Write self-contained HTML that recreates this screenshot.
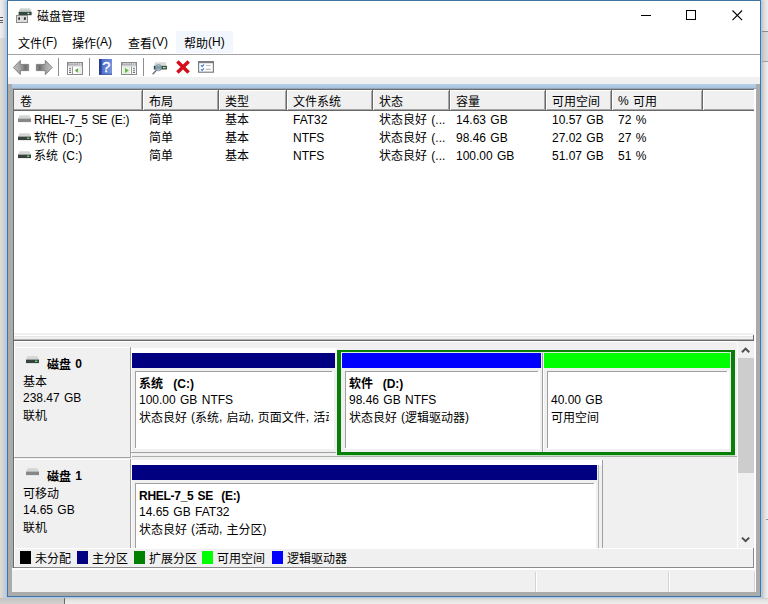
<!DOCTYPE html>
<html lang="zh-CN">
<head>
<meta charset="utf-8">
<title>磁盘管理</title>
<style>
*{box-sizing:border-box;margin:0;padding:0}
html,body{width:768px;height:604px;overflow:hidden}
body{position:relative;background:#e2e0de;font-family:"Liberation Sans","Noto Sans CJK SC",sans-serif;font-size:12px;color:#000;line-height:16px;word-spacing:1px}
#r>div,#r>svg{position:absolute}
.t{white-space:nowrap;line-height:16px;height:16px;overflow:visible}
.b{font-weight:bold}
.c{overflow:hidden!important}
.z{position:relative;top:1px}
.m .z{top:2px}
</style>
</head>
<body>
<div id="r">
<div style="left:0px;top:0px;width:6px;height:604px;background:linear-gradient(90deg,#dfdcd9 0,#d3d3d3 3px,#c3cbd4 5px,#b9cbde 6px);"></div>
<div style="left:0px;top:0px;width:6px;height:38px;background:linear-gradient(90deg,#eeeeee 0,#e4e4e4 3px,#cdd3da 5px,#bccde0 6px);"></div>
<div style="left:0px;top:17px;width:3px;height:1px;background:#555;"></div>
<div style="left:0px;top:20px;width:3px;height:1px;background:#555;"></div>
<div style="left:0px;top:22px;width:3px;height:1px;background:#666;"></div>
<div style="left:762px;top:0px;width:6px;height:604px;background:linear-gradient(90deg,#c6c6c6 0,#dcdcdc 2px,#ededed 6px);"></div>
<div style="left:762px;top:31px;width:6px;height:1px;background:#8c8c8c;"></div>
<div style="left:762px;top:32px;width:6px;height:29px;background:linear-gradient(90deg,#bcbcbc 0,#d0d0d0 2px,#dedede 6px);"></div>
<div style="left:762px;top:61px;width:6px;height:1px;background:#a0a0a0;"></div>
<div style="left:762px;top:62px;width:6px;height:542px;background:linear-gradient(90deg,#bebebe 0,#dadada 2px,#f0f0f0 6px);"></div>
<div style="left:766px;top:519px;width:2px;height:1px;background:#909090;"></div>
<div style="left:0px;top:598px;width:65px;height:6px;background:linear-gradient(180deg,#c4c4c4 0,#d2d0ce 6px);"></div>
<div style="left:65px;top:598px;width:703px;height:6px;background:linear-gradient(180deg,#cccccc 0,#e2e2e2 2px,#f0efee 6px);"></div>
<div style="left:64px;top:597px;width:1px;height:7px;background:#6a6a6a;"></div>
<div style="left:6px;top:0px;width:756px;height:598px;background:#a9cbea;"></div>
<div style="left:6px;top:0px;width:1px;height:1px;background:#dfe3e8;"></div>
<div style="left:761px;top:0px;width:1px;height:1px;background:#dfe3e8;"></div>
<div style="left:7px;top:0px;width:754px;height:597px;background:#fff;border:1px solid #43739f"></div>
<svg style="left:16px;top:7px" width="17" height="17" viewBox="0 0 17 17">
<defs><linearGradient id="gt" x1="0" y1="0" x2="0" y2="1"><stop offset="0" stop-color="#e4e8e6"/><stop offset="1" stop-color="#a9b3ae"/></linearGradient></defs>
<path d="M4.2 1h9.8l1.6 4H2.6z" fill="url(#gt)"/>
<rect x="2.6" y="5" width="13" height="3.2" fill="#33483c"/>
<rect x="11.6" y="5.9" width="1.6" height="1.2" fill="#d8f5dc"/>
<rect x="0.5" y="8.5" width="11" height="7" fill="#dcdcdc" stroke="#8c8c8c"/>
<rect x="2.3" y="10.3" width="1.7" height="2.5" fill="#2e2e2e"/>
<rect x="7.9" y="10.3" width="1.9" height="2.5" fill="#2e2e2e"/>
</svg>
<div class="t" style="left:37px;top:8px;"><span class="z">磁盘管理</span></div>
<svg style="left:636px;top:5px" width="112" height="20" viewBox="0 0 112 20">
<path d="M5 10.5h10" stroke="#000" stroke-width="1" fill="none"/>
<rect x="50.5" y="5.5" width="9" height="9" stroke="#000" stroke-width="1" fill="none"/>
<path d="M96.5 5.5l9.6 9.6M106.1 5.5l-9.6 9.6" stroke="#000" stroke-width="1.1" fill="none"/>
</svg>
<div style="left:176px;top:31px;width:57px;height:22px;background:#f2f7fd;"></div>
<div class="t m" style="left:18px;top:34px;"><span class="z">文件</span>(F)</div>
<div class="t m" style="left:72px;top:34px;"><span class="z">操作</span>(A)</div>
<div class="t m" style="left:128px;top:34px;"><span class="z">查看</span>(V)</div>
<div class="t m" style="left:184px;top:34px;"><span class="z">帮助</span>(H)</div>
<div style="left:8px;top:54px;width:752px;height:1px;background:#a3a3a3;"></div>
<div style="left:8px;top:77px;width:752px;height:7px;background:#f0f0f0;"></div>
<div style="left:58px;top:58px;width:1px;height:18px;background:#8f8f8f;"></div>
<div style="left:89px;top:58px;width:1px;height:18px;background:#8f8f8f;"></div>
<div style="left:143px;top:58px;width:1px;height:18px;background:#8f8f8f;"></div>
<svg style="left:12px;top:59px" width="42" height="18" viewBox="0 0 42 18">
<defs>
<linearGradient id="ga" x1="0" y1="0" x2="1" y2="0"><stop offset="0" stop-color="#c4c4c4"/><stop offset="0.45" stop-color="#a2a2a2"/><stop offset="0.8" stop-color="#6f6f6f"/><stop offset="1" stop-color="#8d8d8d"/></linearGradient>
<linearGradient id="gb" x1="1" y1="0" x2="0" y2="0"><stop offset="0" stop-color="#c4c4c4"/><stop offset="0.45" stop-color="#a2a2a2"/><stop offset="0.8" stop-color="#6f6f6f"/><stop offset="1" stop-color="#8d8d8d"/></linearGradient>
</defs>
<path d="M1.4 8.5L8.3 1.4V5.4H16.6V11.6H8.3V15.6Z" fill="url(#ga)" stroke="#808080" stroke-width="1" stroke-linejoin="round"/>
<path d="M40.2 8.5L33.3 1.4V5.4H24.4V11.6H33.3V15.6Z" fill="url(#gb)" stroke="#808080" stroke-width="1" stroke-linejoin="round"/>
</svg>
<svg style="left:67px;top:62px" width="16" height="13" viewBox="0 0 16 13">
<rect x="0.5" y="0.5" width="15" height="12" fill="#fff" stroke="#8b8b8f"/>
<rect x="1" y="1" width="14" height="2.6" fill="#a3a3a8"/>
<path d="M2 1.8h8" stroke="#e6e6e6" stroke-width="0.8"/>
<rect x="11" y="1.3" width="1.3" height="1.3" fill="#fff"/><rect x="13" y="1.3" width="1.3" height="1.3" fill="#fff"/>
<path d="M1 4.1h14" stroke="#d2d2d6" stroke-width="0.9"/>
<path d="M5.5 4.5v8" stroke="#9a9a9a" stroke-width="1"/>
<path d="M2 6.2h2.2M2 8.3h2.2M2 10.4h2.2" stroke="#6c6c74" stroke-width="1.1"/>
<rect x="12.2" y="5" width="2.8" height="7" fill="#ececec"/>
<path d="M11.2 5.9v5L7.7 8.4z" fill="#5db043"/>
</svg>
<svg style="left:99px;top:59px" width="13" height="16" viewBox="0 0 13 16">
<defs><linearGradient id="gh" x1="0" y1="0" x2="1" y2="0.3"><stop offset="0" stop-color="#3f5fc4"/><stop offset="1" stop-color="#7490de"/></linearGradient></defs>
<rect x="0" y="0" width="13" height="15.6" fill="url(#gh)"/>
<rect x="0" y="0" width="2.6" height="15.6" fill="#27408f"/>
<rect x="0" y="14.8" width="13" height="0.9" fill="#2c4596"/>
<text x="7.4" y="13.2" font-family="Liberation Sans, sans-serif" font-size="14.5" fill="#fff" stroke="#fff" stroke-width="0.3" text-anchor="middle">?</text>
</svg>
<svg style="left:121px;top:62px" width="16" height="13" viewBox="0 0 16 13">
<rect x="0.5" y="0.5" width="15" height="12" fill="#fff" stroke="#8b8b8f"/>
<rect x="1" y="1" width="14" height="2.6" fill="#a3a3a8"/>
<path d="M2 1.8h8" stroke="#e6e6e6" stroke-width="0.8"/>
<rect x="11" y="1.3" width="1.3" height="1.3" fill="#fff"/><rect x="13" y="1.3" width="1.3" height="1.3" fill="#fff"/>
<path d="M1 4.1h14" stroke="#d2d2d6" stroke-width="0.9"/>
<path d="M10.5 4.5v8" stroke="#9a9a9a" stroke-width="1"/>
<path d="M11.9 6.2h2.2M11.9 8.3h2.2M11.9 10.4h2.2" stroke="#6c6c74" stroke-width="1.1"/>
<rect x="1.6" y="5" width="7.6" height="7" fill="#e4f1de"/>
<path d="M4.1 5.9v5L7.6 8.4z" fill="#5db043"/>
</svg>
<svg style="left:152px;top:61px" width="16" height="15" viewBox="0 0 16 15">
<path d="M3.2 1.2h10.4l1 3.7H2z" fill="#d6dad8"/>
<rect x="1.8" y="4.9" width="13.1" height="3.6" fill="#2f4a3b"/>
<rect x="11" y="6" width="2.6" height="1.3" fill="#b5efbd"/>
<circle cx="6.5" cy="6.7" r="3.1" fill="#a9c2da" fill-opacity="0.7" stroke="#7f8fa0" stroke-width="0.9"/>
<path d="M4.4 9.3L0.6 13.2" stroke="#6a6a6a" stroke-width="1.3"/>
</svg>
<svg style="left:175px;top:59px" width="16" height="16" viewBox="0 0 16 16">
<path d="M2.4 2.4L13.6 13.6M13.6 2.4L2.4 13.6" stroke="#d40f1b" stroke-width="3.5" fill="none"/>
</svg>
<svg style="left:198px;top:61px" width="16" height="12" viewBox="0 0 16 12">
<rect x="0.6" y="0.6" width="14.8" height="10.6" fill="#fff" stroke="#7b7f84" stroke-width="1.2"/>
<rect x="0.6" y="0.6" width="14.8" height="1.6" fill="#7b7f84"/>
<path d="M3 4.2l1.2 1.4L6 3.4M3 8.1l1.2 1.4L6 7.3" stroke="#3f7fd0" stroke-width="1.1" fill="none"/>
<path d="M7.8 4.5h5M7.8 8.4h5" stroke="#bdbdbd" stroke-width="1.1"/>
</svg>
<div style="left:8px;top:84px;width:752px;height:512px;background:#ababab;"></div>
<div style="left:12px;top:84px;width:744px;height:4px;background:linear-gradient(180deg,#b9d1ea,#a7c2df);"></div>
<div style="left:12px;top:88px;width:744px;height:1px;background:#93a5ba;"></div>
<div style="left:13px;top:89px;width:742px;height:503px;background:#f0f0f0;"></div>
<div style="left:13px;top:89px;width:742px;height:252px;background:#fff;border-top:1px solid #6b6b6b;border-left:1px solid #6b6b6b;border-right:1px solid #fff"></div>
<div style="left:14px;top:90px;width:740px;height:21px;background:#f0f0f0;border-top:1px solid #fff;border-bottom:1px solid #696969"></div>
<div style="left:14px;top:109px;width:740px;height:1px;background:#a6a6a6;"></div>
<div style="left:141px;top:91px;width:1px;height:19px;background:#a6a6a6;"></div>
<div style="left:142px;top:90px;width:1px;height:21px;background:#696969;"></div>
<div style="left:143px;top:90px;width:1px;height:20px;background:#fff;"></div>
<div style="left:217px;top:91px;width:1px;height:19px;background:#a6a6a6;"></div>
<div style="left:218px;top:90px;width:1px;height:21px;background:#696969;"></div>
<div style="left:219px;top:90px;width:1px;height:20px;background:#fff;"></div>
<div style="left:285px;top:91px;width:1px;height:19px;background:#a6a6a6;"></div>
<div style="left:286px;top:90px;width:1px;height:21px;background:#696969;"></div>
<div style="left:287px;top:90px;width:1px;height:20px;background:#fff;"></div>
<div style="left:371px;top:91px;width:1px;height:19px;background:#a6a6a6;"></div>
<div style="left:372px;top:90px;width:1px;height:21px;background:#696969;"></div>
<div style="left:373px;top:90px;width:1px;height:20px;background:#fff;"></div>
<div style="left:448px;top:91px;width:1px;height:19px;background:#a6a6a6;"></div>
<div style="left:449px;top:90px;width:1px;height:21px;background:#696969;"></div>
<div style="left:450px;top:90px;width:1px;height:20px;background:#fff;"></div>
<div style="left:544px;top:91px;width:1px;height:19px;background:#a6a6a6;"></div>
<div style="left:545px;top:90px;width:1px;height:21px;background:#696969;"></div>
<div style="left:546px;top:90px;width:1px;height:20px;background:#fff;"></div>
<div style="left:610px;top:91px;width:1px;height:19px;background:#a6a6a6;"></div>
<div style="left:611px;top:90px;width:1px;height:21px;background:#696969;"></div>
<div style="left:612px;top:90px;width:1px;height:20px;background:#fff;"></div>
<div style="left:701px;top:91px;width:1px;height:19px;background:#a6a6a6;"></div>
<div style="left:702px;top:90px;width:1px;height:21px;background:#696969;"></div>
<div style="left:703px;top:90px;width:1px;height:20px;background:#fff;"></div>
<div class="t" style="left:20px;top:93px;"><span class="z">卷</span></div>
<div class="t" style="left:149px;top:93px;"><span class="z">布局</span></div>
<div class="t" style="left:225px;top:93px;"><span class="z">类型</span></div>
<div class="t" style="left:293px;top:93px;"><span class="z">文件系统</span></div>
<div class="t" style="left:379px;top:93px;"><span class="z">状态</span></div>
<div class="t" style="left:456px;top:93px;"><span class="z">容量</span></div>
<div class="t" style="left:552px;top:93px;"><span class="z">可用空间</span></div>
<div class="t" style="left:618px;top:93px;">% <span class="z">可用</span></div>
<svg style="left:17.5px;top:115px" width="14" height="8" viewBox="0 0 14 8"><path d="M1.5 0.3h10l1.5 3.4H0z" fill="#d3d6d5"/><rect x="0" y="3.6" width="13" height="3.5" fill="#858887"/></svg>
<div class="t" style="left:34px;top:112px;letter-spacing:-0.3px">RHEL-7_5 SE (E:)</div>
<div class="t" style="left:149px;top:112px;">简单</div>
<div class="t" style="left:225px;top:112px;">基本</div>
<div class="t" style="left:293px;top:112px;">FAT32</div>
<div class="t" style="left:379px;top:112px;">状态良好 (...</div>
<div class="t" style="left:456px;top:112px;">14.63 GB</div>
<div class="t" style="left:552px;top:112px;">10.57 GB</div>
<div class="t" style="left:618px;top:112px;">72 %</div>
<svg style="left:17.5px;top:133px" width="14" height="8" viewBox="0 0 14 8"><path d="M1.5 0.3h10l1.5 3.4H0z" fill="#d3d6d5"/><rect x="0" y="3.6" width="13" height="3.5" fill="#38413e"/><rect x="9" y="4.6" width="2.4" height="1.3" fill="#5ee36a"/></svg>
<div class="t" style="left:34px;top:130px;">软件 (D:)</div>
<div class="t" style="left:149px;top:130px;">简单</div>
<div class="t" style="left:225px;top:130px;">基本</div>
<div class="t" style="left:293px;top:130px;">NTFS</div>
<div class="t" style="left:379px;top:130px;">状态良好 (...</div>
<div class="t" style="left:456px;top:130px;">98.46 GB</div>
<div class="t" style="left:552px;top:130px;">27.02 GB</div>
<div class="t" style="left:618px;top:130px;">27 %</div>
<svg style="left:17.5px;top:151px" width="14" height="8" viewBox="0 0 14 8"><path d="M1.5 0.3h10l1.5 3.4H0z" fill="#d3d6d5"/><rect x="0" y="3.6" width="13" height="3.5" fill="#38413e"/><rect x="9" y="4.6" width="2.4" height="1.3" fill="#5ee36a"/></svg>
<div class="t" style="left:34px;top:148px;">系统 (C:)</div>
<div class="t" style="left:149px;top:148px;">简单</div>
<div class="t" style="left:225px;top:148px;">基本</div>
<div class="t" style="left:293px;top:148px;">NTFS</div>
<div class="t" style="left:379px;top:148px;">状态良好 (...</div>
<div class="t" style="left:456px;top:148px;">100.00 GB</div>
<div class="t" style="left:552px;top:148px;">51.07 GB</div>
<div class="t" style="left:618px;top:148px;">51 %</div>
<div style="left:14px;top:333px;width:740px;height:8px;background:#f0f0f0;"></div>
<div style="left:14px;top:335px;width:740px;height:1px;background:#fff;"></div>
<div style="left:14px;top:336px;width:740px;height:1px;background:#e6e6e6;"></div>
<div style="left:14px;top:339px;width:740px;height:1px;background:#b4b4b4;"></div>
<div style="left:14px;top:340px;width:740px;height:1px;background:#686868;"></div>
<div style="left:753px;top:335px;width:1px;height:6px;background:#686868;"></div>
<div style="left:14px;top:341px;width:740px;height:1px;background:#fff;"></div>
<div style="left:14px;top:341px;width:1px;height:207px;background:#fff;"></div>
<div style="left:14px;top:347px;width:116px;height:1px;background:#fff;"></div>
<div style="left:130px;top:347px;width:1px;height:110px;background:#a0a0a0;"></div>
<div style="left:131px;top:347px;width:1px;height:110px;background:#fff;"></div>
<div style="left:14px;top:457px;width:117px;height:1px;background:#a0a0a0;"></div>
<svg style="left:25.5px;top:356px" width="14" height="8" viewBox="0 0 14 8"><path d="M1.5 0.3h10l1.5 3.4H0z" fill="#d3d6d5"/><rect x="0" y="3.6" width="13" height="3.5" fill="#38413e"/><rect x="9" y="4.6" width="2.4" height="1.3" fill="#5ee36a"/></svg>
<div class="t b" style="left:47px;top:356px;"><span class="z">磁盘</span> 0</div>
<div class="t" style="left:23px;top:373px;"><span class="z">基本</span></div>
<div class="t" style="left:23px;top:390px;">238.47 GB</div>
<div class="t" style="left:23px;top:407px;"><span class="z">联机</span></div>
<div style="left:132px;top:348px;width:205px;height:5px;background:#fff;"></div>
<div style="left:132px;top:353px;width:203px;height:15px;background:#000080;"></div>
<div style="left:135px;top:371px;width:199px;height:78px;background:#fff;"></div>
<div style="left:135px;top:371px;width:197px;height:1px;background:#a0a0a0;"></div>
<div style="left:135px;top:371px;width:1px;height:77px;background:#a0a0a0;"></div>
<div class="t c b" style="left:139px;top:376px;width:190px;word-spacing:1.8px">系统&nbsp; (C:)</div>
<div class="t c" style="left:139px;top:392px;width:190px;">100.00 GB NTFS</div>
<div class="t c" style="left:139px;top:409px;width:190px;word-spacing:0.7px"><span class="z">状态良好</span> (<span class="z">系统</span>, <span class="z">启动</span>, <span class="z">页面文件</span>, <span class="z">活动</span>, <span class="z">故障转储</span>, <span class="z">主分区</span>)</div>
<div style="left:337px;top:350px;width:398px;height:105px;background:transparent;border:3px solid #088008;border-left-width:4px;border-right-width:4px"></div>
<div style="left:342px;top:353px;width:199px;height:15px;background:#0000ff;"></div>
<div style="left:345px;top:371px;width:195px;height:78px;background:#fff;"></div>
<div style="left:345px;top:371px;width:193px;height:1px;background:#a0a0a0;"></div>
<div style="left:345px;top:371px;width:1px;height:77px;background:#a0a0a0;"></div>
<div class="t c b" style="left:349px;top:376px;width:186px;word-spacing:1.5px">软件&nbsp; (D:)</div>
<div class="t c" style="left:349px;top:392px;width:186px;">98.46 GB NTFS</div>
<div class="t c" style="left:349px;top:409px;width:186px;word-spacing:0.7px"><span class="z">状态良好</span> (<span class="z">逻辑驱动器</span>)</div>
<div style="left:542px;top:353px;width:1px;height:99px;background:#a0a0a0;"></div>
<div style="left:543px;top:353px;width:1px;height:99px;background:#fff;"></div>
<div style="left:341px;top:352px;width:390px;height:1px;background:#d8eed8;"></div>
<div style="left:337px;top:455px;width:398px;height:1px;background:#b9e3b9;"></div>
<div style="left:544px;top:353px;width:186px;height:15px;background:#00ff00;"></div>
<div style="left:547px;top:371px;width:182px;height:78px;background:#fff;"></div>
<div style="left:547px;top:371px;width:180px;height:1px;background:#a0a0a0;"></div>
<div style="left:547px;top:371px;width:1px;height:77px;background:#a0a0a0;"></div>
<div class="t c" style="left:551px;top:392px;width:173px;">40.00 GB</div>
<div class="t c" style="left:551px;top:409px;width:173px;word-spacing:0.7px"><span class="z">可用空间</span></div>
<div style="left:131px;top:452px;width:205px;height:1px;background:#a0a0a0;"></div>
<div style="left:132px;top:456px;width:605px;height:1px;background:#a8b0a8;"></div>
<div style="left:14px;top:459px;width:116px;height:1px;background:#fff;"></div>
<div style="left:130px;top:459px;width:1px;height:110px;background:#a0a0a0;"></div>
<div style="left:131px;top:459px;width:1px;height:110px;background:#fff;"></div>
<div style="left:14px;top:569px;width:117px;height:1px;background:#a0a0a0;"></div>
<svg style="left:25.5px;top:468px" width="14" height="8" viewBox="0 0 14 8"><path d="M1.5 0.3h10l1.5 3.4H0z" fill="#d3d6d5"/><rect x="0" y="3.6" width="13" height="3.5" fill="#858887"/></svg>
<div class="t b" style="left:47px;top:468px;"><span class="z">磁盘</span> 1</div>
<div class="t" style="left:23px;top:485px;"><span class="z">可移动</span></div>
<div class="t" style="left:23px;top:502px;">14.65 GB</div>
<div class="t" style="left:23px;top:519px;"><span class="z">联机</span></div>
<div style="left:132px;top:460px;width:470px;height:5px;background:#fff;"></div>
<div style="left:132px;top:465px;width:465px;height:15px;background:#000080;"></div>
<div style="left:135px;top:483px;width:461px;height:78px;background:#fff;"></div>
<div style="left:135px;top:483px;width:459px;height:1px;background:#a0a0a0;"></div>
<div style="left:135px;top:483px;width:1px;height:77px;background:#a0a0a0;"></div>
<div class="t c b" style="left:139px;top:488px;width:452px;letter-spacing:-0.27px">RHEL-7_5 SE&nbsp; (E:)</div>
<div class="t c" style="left:139px;top:504px;width:452px;">14.65 GB FAT32</div>
<div class="t c" style="left:139px;top:521px;width:452px;word-spacing:0.7px"><span class="z">状态良好</span> (<span class="z">活动</span>, <span class="z">主分区</span>)</div>
<div style="left:598px;top:465px;width:1px;height:100px;background:#b4b4b4;"></div>
<div style="left:602px;top:460px;width:1px;height:100px;background:#a0a0a0;"></div>
<div style="left:738px;top:341px;width:16px;height:207px;background:#f0f0f0;"></div>
<div style="left:737px;top:341px;width:1px;height:207px;background:#fff;"></div>
<div style="left:738px;top:358px;width:16px;height:115px;background:#cdcdcd;"></div>
<svg style="left:738px;top:341px" width="16" height="17" viewBox="0 0 16 17"><path d="M4 11.2L7.6 7.6L11.2 11.2" stroke="#4d4d4d" stroke-width="2" fill="none"/></svg>
<svg style="left:738px;top:531px" width="16" height="17" viewBox="0 0 16 17"><path d="M4 6.6L7.6 10.2L11.2 6.6" stroke="#4d4d4d" stroke-width="2" fill="none"/></svg>
<div style="left:14px;top:548px;width:740px;height:19px;background:#f0f0f0;border-top:1px solid #fff;border-left:1px solid #fff"></div>
<div style="left:20px;top:551px;width:11px;height:13px;background:#000000;"></div>
<div class="t" style="left:35px;top:550px;"><span class="z">未分配</span></div>
<div style="left:77px;top:551px;width:11px;height:13px;background:#000080;"></div>
<div class="t" style="left:92px;top:550px;"><span class="z">主分区</span></div>
<div style="left:134px;top:551px;width:11px;height:13px;background:#008000;"></div>
<div class="t" style="left:149px;top:550px;"><span class="z">扩展分区</span></div>
<div style="left:202px;top:551px;width:11px;height:13px;background:#00ff00;"></div>
<div class="t" style="left:217px;top:550px;"><span class="z">可用空间</span></div>
<div style="left:272px;top:551px;width:11px;height:13px;background:#0000ff;"></div>
<div class="t" style="left:287px;top:550px;"><span class="z">逻辑驱动器</span></div>
<div style="left:753px;top:548px;width:1px;height:20px;background:#8a8a8a;"></div>
<div style="left:13px;top:567px;width:741px;height:1px;background:#8a8a8a;"></div>
<div style="left:13px;top:89px;width:1px;height:479px;background:#6b6b6b;"></div>
<div style="left:754px;top:89px;width:2px;height:481px;background:#fff;"></div>
<div style="left:12px;top:568px;width:744px;height:24px;background:#f0f0f0;"></div>
<div style="left:12px;top:568px;width:744px;height:2px;background:#fff;"></div>
<div style="left:535px;top:572px;width:1px;height:20px;background:#d4d4d4;"></div>
<div style="left:536px;top:572px;width:1px;height:20px;background:#fff;"></div>
<div style="left:668px;top:572px;width:1px;height:20px;background:#d4d4d4;"></div>
<div style="left:669px;top:572px;width:1px;height:20px;background:#fff;"></div>
<div style="left:754px;top:572px;width:1px;height:20px;background:#d4d4d4;"></div>
<div style="left:755px;top:572px;width:1px;height:20px;background:#fff;"></div>
</div>
</body>
</html>
